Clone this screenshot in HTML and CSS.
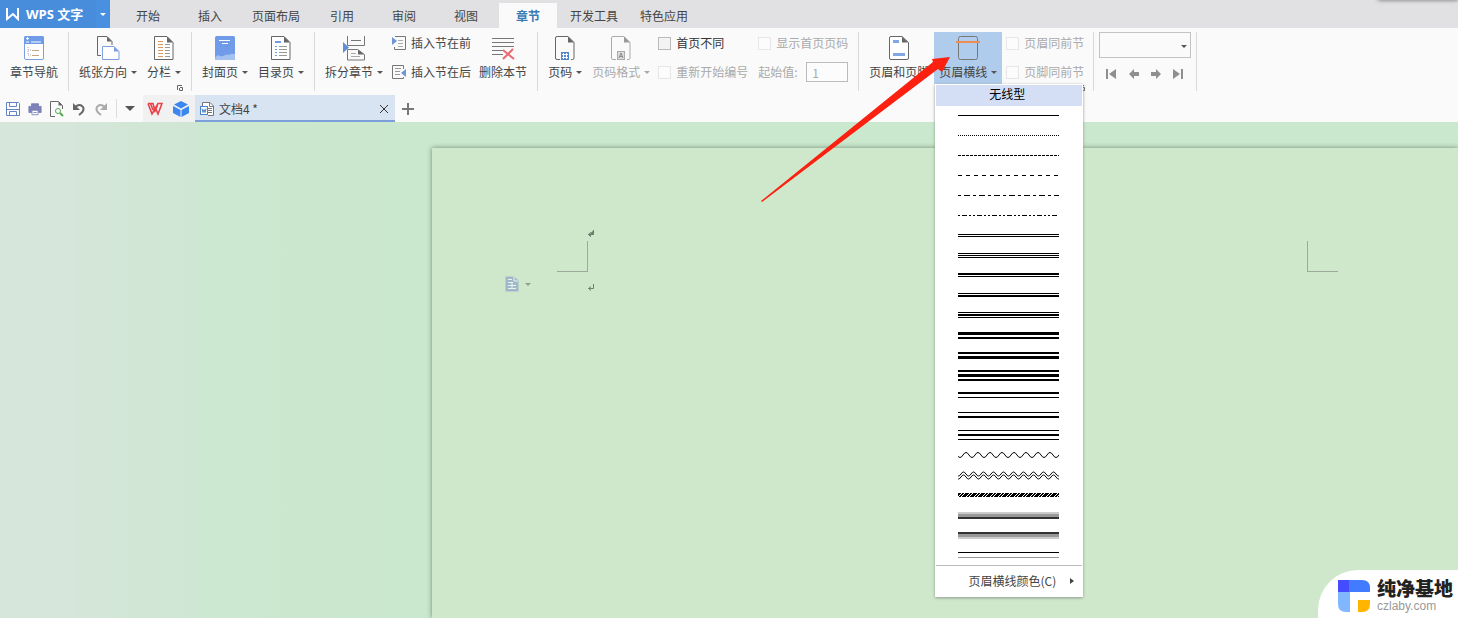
FILE: index.html
```html
<!DOCTYPE html>
<html lang="zh-CN">
<head>
<meta charset="utf-8">
<title>WPS 文字</title>
<link rel="stylesheet" href="styles.css">
</head>
<body>
<div class="app">
  <header class="tabbar">
    <button class="brand">
      <svg width="16" height="14" viewBox="0 0 16 14"><path d="M2 1v11l6-5 5 5V1" fill="none" stroke="#fff" stroke-width="2"/></svg>
      <span>WPS 文字</span>
    </button>
    <button class="brand-more" aria-label="应用菜单"><span class="caret light"></span></button>
    <nav class="tabs">
      <button class="tab">开始</button>
      <button class="tab">插入</button>
      <button class="tab wide">页面布局</button>
      <button class="tab">引用</button>
      <button class="tab">审阅</button>
      <button class="tab">视图</button>
      <button class="tab active">章节</button>
      <button class="tab wide">开发工具</button>
      <button class="tab wide">特色应用</button>
    </nav>
    <div class="window-shade"></div>
  </header>

  <section class="ribbon">
    <div class="group">
      <button class="big">
        <svg width="22" height="26" viewBox="0 0 22 26"><rect x="1.500" y="1.500" width="19" height="23" rx="1.500" fill="#fff" stroke="#7b9fe0"/><path d="M1 2.500Q1 1 2.500 1h17q1.500 0 1.500 1.500V9H1z" fill="#6f9be8"/><path d="M3 3.500h3M4.500 2v3M3 7h3M8 7h10" stroke="#fff"/><path d="M5 12v8h3M5 15h3" fill="none" stroke="#aaa" stroke-dasharray="1 1"/><path d="M9 15.500h7M9 20.500h7" stroke="#c4a582"/></svg>
        <span class="label">章节导航</span>
      </button>
    </div>

    <div class="group">
      <button class="big">
        <svg width="26" height="26" viewBox="0 0 26 26"><path d="M6 20.500H2.500v-19H12l5 5V10" fill="none" stroke="#666"/><path d="M12 1.500v5h5z" fill="#666"/><path d="M7.500 11.500H19l5 5v8H7.500z" fill="#fff" stroke="#7b9fe0"/><path d="M19 11.500v5h5z" fill="#7b9fe0"/></svg>
        <span class="label">纸张方向<i class="caret"></i></span>
      </button>
      <button class="big">
        <svg width="22" height="26" viewBox="0 0 22 26"><path d="M1.500 1.500H14l6 6v17H1.500z" fill="#fff" stroke="#666"/><path d="M14 1.500v6h6z" fill="#666"/><path d="M5 6.500h5M5 9.500h5M5 12.500h5M5 15.500h5M5 18.500h5M5 21.500h5" stroke="#dd965c"/><path d="M12 9.500h5M12 12.500h5M12 15.500h5M12 18.500h5M12 21.500h5" stroke="#999"/></svg>
        <span class="label">分栏<i class="caret"></i></span>
      </button>
      <button class="launcher" aria-label="页面设置"><svg width="6" height="6" viewBox="0 0 6 6"><path d="M.5 5V.5H5M2.500 3v2.500h3V2.500H3" fill="none" stroke="#666"/></svg></button>
    </div>

    <div class="group">
      <button class="big">
        <svg width="22" height="26" viewBox="0 0 22 26"><rect x="1" y="1" width="20" height="24" rx="1.500" fill="#6f9be8"/><path d="M5 5.500h11M8 8.500h6" stroke="#fff"/><path d="M1 23q2-4 5-2 3 1 5-1 2-1 4 0 2-2 6-1v4.500q0 1.500-1.500 1.500H2.500Q1 25 1 23z" fill="#a5c1f2"/></svg>
        <span class="label">封面页<i class="caret"></i></span>
      </button>
      <button class="big">
        <svg width="22" height="26" viewBox="0 0 22 26"><path d="M1.500 1.500H14l6 6v17H1.500z" fill="#fff" stroke="#666"/><path d="M14 1.500v6h6z" fill="#666"/><path d="M5 7h6" stroke="#6f9be8" stroke-width="2"/><path d="M5 11.500h2M5 14.500h2M5 17.500h2M5 20.500h2" stroke="#6f9be8"/><path d="M9 11.500h8M9 14.500h8M9 17.500h8M9 20.500h8" stroke="#999"/></svg>
        <span class="label">目录页<i class="caret"></i></span>
      </button>
    </div>

    <div class="group section-group">
      <button class="big">
        <svg width="26" height="26" viewBox="0 0 26 26"><path d="M6.500 1v9.500h17V1M10 5.500h10M6.500 25V14.500h10l7 5V25z" fill="none" stroke="#777"/><path d="M17 14.500v5h6z" fill="#666"/><path d="M10 18.500h5M10 21.500h9" stroke="#aaa"/><path d="M2 7l6 5.500L2 18z" fill="#5f8fd8"/></svg>
        <span class="label">拆分章节<i class="caret"></i></span>
      </button>
      <div class="stack">
        <button class="small"><svg width="14" height="16" viewBox="0 0 14 16"><path d="M3 1.500h10.500v13H2.500V12" fill="none" stroke="#777"/><path d="M6 5.500h5M6 8.500h5M6 11.500h5" stroke="#aaa"/><path d="M0 2l5 4-5 4z" fill="#6f94d8"/></svg>插入节在前</button>
        <button class="small"><svg width="14" height="16" viewBox="0 0 14 16"><path d="M11.500 5V1.500H.5v13h11V13" fill="none" stroke="#777"/><path d="M3 4.500h6M3 7.500h5M3 10.500h5" stroke="#999"/><path d="M14 5L9 9l5 4z" fill="#6f94d8"/></svg>插入节在后</button>
      </div>
      <button class="big after-stack">
        <svg width="24" height="26" viewBox="0 0 24 26"><path d="M1 3.500h22M1 7.500h22M1 11.500h22M1 15.500h11M1 19.500h11" stroke="#777"/><path d="M12 15l11 9M22 14L12 24" stroke="#ed6a72" stroke-width="2"/></svg>
        <span class="label">删除本节</span>
      </button>
    </div>

    <div class="group">
      <button class="big">
        <svg width="22" height="26" viewBox="0 0 22 26"><path d="M6 24.500H3q-1.500 0-1.500-1.500V3Q1.500 1.500 3 1.500h11l6 6V23q0 1.500-1.500 1.500H17" fill="none" stroke="#666"/><path d="M14 1.500v6h6z" fill="#666"/><rect x="7" y="17" width="8" height="8" fill="#4f86c9"/><path d="M9.500 18v6M12.500 18v6M8 19.500h6M8 22.500h6" stroke="#fff"/></svg>
        <span class="label">页码<i class="caret"></i></span>
      </button>
      <button class="big" disabled>
        <svg width="22" height="26" viewBox="0 0 22 26"><path d="M6 24.500H3q-1.500 0-1.500-1.500V3Q1.500 1.500 3 1.500h11l6 6V23q0 1.500-1.500 1.500H17" fill="none" stroke="#aaa"/><path d="M14 1.500v6h6z" fill="#999"/><rect x="7.500" y="16.500" width="7" height="8" fill="#ddd" stroke="#aaa"/><path d="M9 23l2-5 2 5M10 21.500h2" fill="none" stroke="#888"/></svg>
        <span class="label">页码格式<i class="caret"></i></span>
      </button>
      <div class="stack checks">
        <label class="check"><input type="checkbox">首页不同</label>
        <label class="check off"><input type="checkbox" disabled>重新开始编号</label>
      </div>
      <div class="stack">
        <label class="check off"><input type="checkbox" disabled>显示首页页码</label>
        <label class="start off">起始值: <input type="text" value="1" disabled></label>
      </div>
    </div>

    <div class="group header-group">
      <button class="big">
        <svg width="22" height="26" viewBox="0 0 22 26"><path d="M14 1.500H3Q1.500 1.500 1.500 3v20q0 1.500 1.500 1.500h16q1.500 0 1.500-1.500V7.500z" fill="#fff" stroke="#666"/><path d="M14 1.500v6h6z" fill="#666"/><path d="M5 6.500h6M5 19.500h12" stroke="#7fa8e2" stroke-width="3"/></svg>
        <span class="label">页眉和页脚</span>
      </button>
      <div class="dropdown">
        <button class="big open" aria-expanded="true">
          <svg width="26" height="26" viewBox="0 0 26 26"><rect x="3.500" y="1.500" width="19" height="23" rx="2" fill="none" stroke="#777"/><path d="M1 7h24" stroke="#ee8d50" stroke-width="2"/></svg>
          <span class="label">页眉横线<i class="caret"></i></span>
        </button>
        <div class="menu">
          <button class="none">无线型</button>
          <button class="line" aria-label="线型 1"><svg width="101" height="20"><path d="M0 10.500h101"/></svg></button>
          <button class="line" aria-label="线型 2"><svg width="101" height="20"><path d="M0 10.500h101" stroke-dasharray="1 1"/></svg></button>
          <button class="line" aria-label="线型 3"><svg width="101" height="20"><path d="M0 10.500h101" stroke-dasharray="3 1"/></svg></button>
          <button class="line" aria-label="线型 4"><svg width="101" height="20"><path d="M0 10.500h101" stroke-dasharray="4 4"/></svg></button>
          <button class="line" aria-label="线型 5"><svg width="101" height="20"><path d="M0 10.500h101" stroke-dasharray="3 3 6 3"/></svg></button>
          <button class="line" aria-label="线型 6"><svg width="101" height="20"><path d="M0 10.500h101" stroke-dasharray="2 2 5 2 2 2"/></svg></button>
          <button class="line" aria-label="线型 7"><svg width="101" height="20"><path d="M0 9.500h101M0 11.500h101"/></svg></button>
          <button class="line" aria-label="线型 8"><svg width="101" height="20"><path d="M0 8.500h101M0 10.500h101M0 12.500h101"/></svg></button>
          <button class="line" aria-label="线型 9"><svg width="101" height="20"><path d="M0 8.500h101M0 9.500h101M0 11.500h101"/></svg></button>
          <button class="line" aria-label="线型 10"><svg width="101" height="20"><path d="M0 8.500h101M0 10.500h101M0 11.500h101"/></svg></button>
          <button class="line" aria-label="线型 11"><svg width="101" height="20"><path d="M0 7.500h101M0 9.500h101M0 10.500h101M0 12.500h101"/></svg></button>
          <button class="line" aria-label="线型 12"><svg width="101" height="20"><path d="M0 7.500h101M0 8.500h101M0 9.500h101M0 12.500h101M0 13.500h101"/></svg></button>
          <button class="line" aria-label="线型 13"><svg width="101" height="20"><path d="M0 7.500h101M0 8.500h101M0 11.500h101M0 12.500h101M0 13.500h101"/></svg></button>
          <button class="line" aria-label="线型 14"><svg width="101" height="20"><path d="M0 5.500h101M0 6.500h101M0 9.500h101M0 10.500h101M0 11.500h101M0 14.500h101M0 15.500h101"/></svg></button>
          <button class="line" aria-label="线型 15"><svg width="101" height="20"><path d="M0 7.500h101M0 8.500h101M0 12.500h101"/></svg></button>
          <button class="line" aria-label="线型 16"><svg width="101" height="20"><path d="M0 7.500h101M0 11.500h101M0 12.500h101"/></svg></button>
          <button class="line" aria-label="线型 17"><svg width="101" height="20"><path d="M0 5.500h101M0 9.500h101M0 10.500h101M0 14.500h101"/></svg></button>
          <button class="line" aria-label="线型 18"><svg width="101" height="20"><path d="M-1 10q3 5 6 0t6 0t6 0t6 0t6 0t6 0t6 0t6 0t6 0t6 0t6 0t6 0t6 0t6 0t6 0t6 0t6 0t6 0"/></svg></button>
          <button class="line" aria-label="线型 19"><svg width="101" height="20"><path id="w" d="M-2 9q2.500 4 5 0t5 0t5 0t5 0t5 0t5 0t5 0t5 0t5 0t5 0t5 0t5 0t5 0t5 0t5 0t5 0t5 0t5 0t5 0t5 0t5 0"/><use href="#w" y="3"/></svg></button>
          <button class="line" aria-label="线型 20"><svg width="101" height="20"><defs><pattern id="hatch" width="8" height="4" y="8" patternUnits="userSpaceOnUse"><rect width="8" height="4" fill="#000"/><path class="gap" d="M0 4l4-4M3 4l4-4"/></pattern></defs><rect y="8" width="101" height="4" fill="url(#hatch)"/></svg></button>
          <button class="line" aria-label="线型 21"><svg width="101" height="20"><path d="M0 8h101" stroke="#ccc" stroke-width="2"/><path d="M0 10.500h101" stroke="#999" stroke-width="3"/><path d="M0 13h101" stroke="#333" stroke-width="2"/></svg></button>
          <button class="line" aria-label="线型 22"><svg width="101" height="20"><path d="M0 8h101" stroke="#333" stroke-width="2"/><path d="M0 10.500h101" stroke="#999" stroke-width="3"/><path d="M0 13h101" stroke="#ccc" stroke-width="2"/></svg></button>
          <button class="line" aria-label="线型 23"><svg width="101" height="20"><path d="M0 7.500h101"/><path d="M0 12.500h101" stroke="#999"/></svg></button>
          <button class="color">页眉横线颜色(C)<svg width="4" height="6" viewBox="0 0 4 6"><path d="M0 0l4 3-4 3z" fill="#444"/></svg></button>
        </div>
      </div>
      <div class="stack same">
        <label class="check off"><input type="checkbox" disabled>页眉同前节</label>
        <label class="check off"><input type="checkbox" disabled>页脚同前节</label>
      </div>
      <button class="launcher" aria-label="页眉页脚选项"><svg width="6" height="6" viewBox="0 0 6 6"><path d="M.5 5V.5H5M2.500 3v2.500h3V2.500H3" fill="none" stroke="#666"/></svg></button>
    </div>

    <div class="group jump">
      <div class="select-box"><select aria-label="节"><option></option></select><i class="caret"></i></div>
      <div class="jump-row">
        <button aria-label="第一节"><svg width="12" height="12" viewBox="0 0 12 12"><path d="M1 1h2v10H1zM11 1v10L4 6z"/></svg></button>
        <button aria-label="上一节"><svg width="12" height="12" viewBox="0 0 12 12"><path d="M1 6l5-5v3h5v4H6v3z"/></svg></button>
        <button aria-label="下一节"><svg width="12" height="12" viewBox="0 0 12 12"><path d="M11 6L6 1v3H1v4h5v3z"/></svg></button>
        <button aria-label="最后一节"><svg width="12" height="12" viewBox="0 0 12 12"><path d="M9 1h2v10H9zM1 1v10l7-5z"/></svg></button>
      </div>
    </div>
  </section>

  <section class="docbar">
    <div class="quick">
      <button aria-label="保存"><svg width="14" height="16" viewBox="0 0 14 16"><path d="M.5 1.500h12l1 1v12H.5z" fill="#fff" stroke="#6283c7"/><path d="M3.500 1.500v4h7v-4M.5 8.500h13M3.500 14V10.500h7V14" fill="none" stroke="#6283c7"/></svg></button>
      <button aria-label="打印"><svg width="14" height="16" viewBox="0 0 16 16"><path d="M4 5V2h8v3M1 5h14v7h-3V9H4v3H1z" fill="#7d82b8" stroke="#7d82b8" stroke-linejoin="round"/><path d="M4.500 9.500h7v5h-7zM6 12h4" fill="#fff" stroke="#7d82b8"/></svg></button>
      <button aria-label="打印预览"><svg width="14" height="16" viewBox="0 0 14 16"><path d="M5 15.500H.5V.5h8l4 4V8" fill="none" stroke="#666"/><path d="M8.500.5v4h4z" fill="#666"/><circle cx="8" cy="10" r="2.500" fill="#fff" stroke="#53a653"/><path d="M10 12l3 3" stroke="#53a653" stroke-width="2"/></svg></button>
      <button aria-label="撤销"><svg width="14" height="16" viewBox="0 0 14 16"><path d="M3 6q5-4 8 0 2 4-4 8" fill="none" stroke="#666" stroke-width="2"/><path d="M1 2v7h7z" fill="#666"/></svg></button>
      <button aria-label="恢复"><svg width="14" height="16" viewBox="0 0 14 16"><path d="M11 6Q6 2 3 6q-2 4 4 8" fill="none" stroke="#aaa" stroke-width="2"/><path d="M13 2v7H6z" fill="#aaa"/></svg></button>
    </div>
    <button class="quick-more" aria-label="自定义"><svg width="10" height="5" viewBox="0 0 10 5"><path d="M0 0h10L5 5z" fill="#555"/></svg></button>
    <div class="pins">
      <button aria-label="WPS 首页"><svg width="16" height="14" viewBox="0 0 16 14"><path d="M1 1.500h5L8 9l2.500-5.500M1 1.500L5 12l6-10.500h4L11 12 8.500 6M3.500 1.500L6 8" fill="none" stroke="#e8434b" stroke-width="1.600"/></svg></button>
      <button aria-label="云服务"><svg width="16" height="16" viewBox="0 0 16 16"><path d="M8 0l7 3.500L8 7.500 1 3.500zM0 5l7.500 4v7L0 12zM16 5L8.500 9v7l7.500-4z" fill="#3b87ee"/></svg></button>
    </div>
    <div class="doc-tab">
      <svg width="14" height="16" viewBox="0 0 14 16"><path d="M2.500 5V1.500H10l3.500 3.500v9.500H8" fill="#fff" stroke="#777"/><path d="M9.500 1.500v4h4M8 7.500h4M8 9.500h4M8 11.500h4" fill="none" stroke="#777"/><rect x=".5" y="5.500" width="7" height="8" fill="#fff" stroke="#4a86c5"/><path d="M2 7.500l1 4 1-3 1 3 1-4" fill="none" stroke="#4a86c5"/></svg>
      <span class="doc-name">文档4 *</span>
      <button aria-label="关闭"><svg width="8" height="8" viewBox="0 0 8 8"><path d="M0 0l8 8M8 0L0 8" stroke="#333"/></svg></button>
    </div>
    <button class="new-tab" aria-label="新建"><svg width="12" height="12" viewBox="0 0 12 12"><path d="M6 0v12M0 6h12" stroke="#777" stroke-width="2"/></svg></button>
  </section>

  <main class="workspace">
    <article class="page">
      <div class="head-mark"><svg width="8" height="8" viewBox="0 0 8 8"><path d="M7 0v4.500H2M4 2L1 4.500 4 7z" fill="#6e7d6c" fill-rule="evenodd" stroke="none"/><path d="M6.500 0v4.500H2M4 2.500L1.500 4.500 4 6.500" fill="none" stroke="#6e7d6c"/></svg></div>
      <div class="corners"><span class="corner left"></span><span class="corner right"></span></div>
      <div class="first-line">
        <button class="paste" aria-label="段落布局"><svg width="14" height="16" viewBox="0 0 14 16"><path d="M.5.5H9l4.500 4v11H.5z" fill="#9fb9cb"/><path d="M3 3.500h4M3 6.500h5M3 9.500h8M3 12.500h8M9 1v4h4M7 7v5" fill="none" stroke="#eaf3ec"/></svg><i class="caret faint"></i></button>
        <svg width="8" height="8" viewBox="0 0 8 8"><path d="M6.500 0v4.500H2M4 2.500L1.500 4.500 4 6.500" fill="none" stroke="#6e7d6c"/></svg>
      </div>
    </article>
  </main>

  <svg class="pointer" width="192" height="148" viewBox="0 0 192 148"><path d="M190 1l-18 2 1 3L1 145l1 1L178 13l4 3z" fill="#fb200f"/></svg>

  <aside class="site">
    <svg width="32" height="32" viewBox="0 0 32 32"><path d="M0 0h11v12H0z" fill="#454cff"/><path d="M11 0h13q8 0 8 8v4H11z" fill="#427bff"/><path d="M0 12h12v20H8q-8 0-8-8z" fill="#80b7ff"/><path d="M20 20h12v4q0 8-8 8h-4z" fill="#ffb500"/></svg>
    <div><strong>纯净基地</strong><small>czlaby.com</small></div>
  </aside>
</div>
</body>
</html>
```
FILE: styles.css
```css
* { box-sizing: border-box; }
body { margin: 0; font: 12px/16px "Noto Sans CJK SC", sans-serif; color: #444; }
button, input, select { font: inherit; color: inherit; }
button { padding: 0; border: 0; background: none; }
svg { display: block; flex: none; }
.app { position: relative; display: flex; flex-direction: column; min-height: 100vh; background: #fafafa; overflow: hidden; }

.caret { flex: none; width: 0; height: 0; border: 3px solid transparent; border-top-color: #555; border-bottom: 0; }
.caret.light { border-top-color: #fff; }
.caret.faint { border-top-color: #8fa18d; }

.tabbar { position: relative; display: flex; height: 28px; background: #e1e1e3; }
.brand { display: flex; align-items: center; gap: 5px; width: 96px; padding-left: 5px; background: #478ddc; color: #fff; font: 700 13px/16px "Open Sans", "Noto Sans CJK SC", sans-serif; white-space: nowrap; }
.brand-more { display: flex; align-items: center; justify-content: center; width: 14px; background: #4a90e0; }
.tabs { display: flex; gap: 4px; padding: 3px 0 0 9px; }
.tab { width: 58px; }
.tab.wide { width: 66px; }
.tab.active { background: #fafafa; color: #3a7bb4; font-weight: 700; }
.window-shade { position: absolute; right: 0; top: -4px; width: 80px; height: 4px; box-shadow: 0 0 4px #666; }

.ribbon { display: flex; height: 67px; padding-top: 4px; }
.group { position: relative; display: flex; flex: none; height: 59px; gap: 10px; padding: 0 10px; border-right: 1px solid #d9d9d9; }
.group.section-group { gap: 9px; }
.big { display: flex; flex-direction: column; align-items: center; gap: 2px; height: 52px; padding-top: 3px; }
.big:disabled { color: #aaa; }
.big:disabled .caret { border-top-color: #aaa; }
.label { display: flex; align-items: center; gap: 4px; height: 18px; white-space: nowrap; }
.launcher { position: absolute; right: 8px; bottom: 0; }
.stack { display: flex; flex-direction: column; gap: 9px; padding-top: 1px; }
.small { display: flex; align-items: center; gap: 5px; height: 20px; white-space: nowrap; }
.after-stack { margin-left: -1px; }
.checks { margin-left: -2px; }
.check { display: flex; align-items: center; gap: 5px; height: 20px; color: #333; white-space: nowrap; }
.check input { appearance: none; width: 13px; height: 13px; margin: 0; border: 1px solid #bbb; background: #f3f3f3; }
.check.off, .off { color: #aaa; }
.check.off input { border-color: #e6e6e6; background: #fcfcfc; }
.start { display: flex; align-items: center; justify-content: space-between; height: 20px; white-space: nowrap; }
.start input { width: 42px; height: 20px; padding: 0 5px; border: 1px solid #bbb; background: #fcfcfc; }
.header-group { gap: 5px; padding-right: 9px; }
.dropdown { position: relative; }
.big.open { width: 68px; background: #b0ccec; }
.same { margin-left: -1px; }

.menu { position: absolute; z-index: 2; left: 1px; top: 52px; display: flex; flex-direction: column; width: 148px; padding: 1px; background: #fff; box-shadow: 0 1px 3px #8d998d; }
.none { height: 21px; margin-bottom: -1px; padding: 0 4px 3px 0; background: #d4dff6; color: #000; }
.line { display: flex; padding-left: 22px; height: 20px; }
.line path, .line use { fill: none; stroke: #000; }
.line path[stroke="#ccc"] { stroke: #ccc; }
.line path[stroke="#999"] { stroke: #999; }
.line path[stroke="#333"] { stroke: #333; }
.line .gap { stroke: #fff; }
.color { display: flex; align-items: center; justify-content: flex-end; gap: 14px; height: 31px; padding-right: 8px; border-top: 1px solid #bbb; }

.jump { flex-direction: column; padding: 0 5px; }
.select-box { position: relative; width: 92px; }
.select-box select { appearance: none; display: block; width: 100%; height: 26px; border: 1px solid #c3c3c3; background: #fafafa; border-radius: 0; }
.select-box .caret { position: absolute; right: 4px; top: 13px; }
.jump-row { display: flex; justify-content: space-between; padding: 0 7px 0 6px; }
.jump-row path { fill: #8f8f8f; }

.docbar { display: flex; align-items: stretch; height: 27px; }
.quick { display: flex; align-items: center; gap: 8px; margin: 4px 0; padding: 0 8px 0 6px; border-right: 1px solid #ddd; }
.quick-more { width: 26px; display: flex; align-items: center; justify-content: center; }
.pins { display: flex; align-items: center; gap: 10px; padding: 0 6px 0 4px; background: #f1f1f1; }
.doc-tab { display: flex; align-items: center; gap: 5px; width: 200px; padding: 2px 7px 0 5px; background: #d9e4f2; border-bottom: 2px solid #7da0da; }
.doc-name { flex: 1; }
.new-tab { padding: 0 7px; }

.workspace { flex: 1; display: flex; padding: 26px 0 0 432px; background: linear-gradient(90deg, #d7e6da 0, #d7e6da 75px, #d4e6d8 75px, #d0e6d4 195px, #cde8d2 195px, #cbe8ce 320px, #cae8cd 432px); }
.page { flex: 1; padding-top: 82px; background: #cfe8cb; box-shadow: 0 0 5px #738875; }
.head-mark { padding-left: 155px; }
.corners { display: flex; justify-content: space-between; margin: 3px 120px 0 125px; }
.corner { width: 31px; height: 31px; border-bottom: 1px solid #9caa9a; }
.corner.left { border-right: 1px solid #9caa9a; }
.corner.right { border-left: 1px solid #9caa9a; }
.first-line { display: flex; align-items: flex-start; gap: 56px; padding: 4px 0 0 73px; }
.first-line > svg { margin-top: 8px; }
.paste { display: flex; align-items: center; gap: 6px; }

.pointer { position: absolute; z-index: 3; left: 760px; top: 56px; pointer-events: none; }
.site { position: absolute; right: 0; bottom: 0; display: flex; align-items: center; gap: 7px; width: 140px; height: 48px; padding: 4px 4px 0 20px; background: #fff; border-radius: 40px 0 0; white-space: nowrap; }
.site strong { display: block; color: #222; font: 900 19px/20px "Liberation Sans", "Noto Sans CJK SC", sans-serif; }
.site small { display: block; color: #999; font: 12px/12px "Liberation Sans", sans-serif; }
```
